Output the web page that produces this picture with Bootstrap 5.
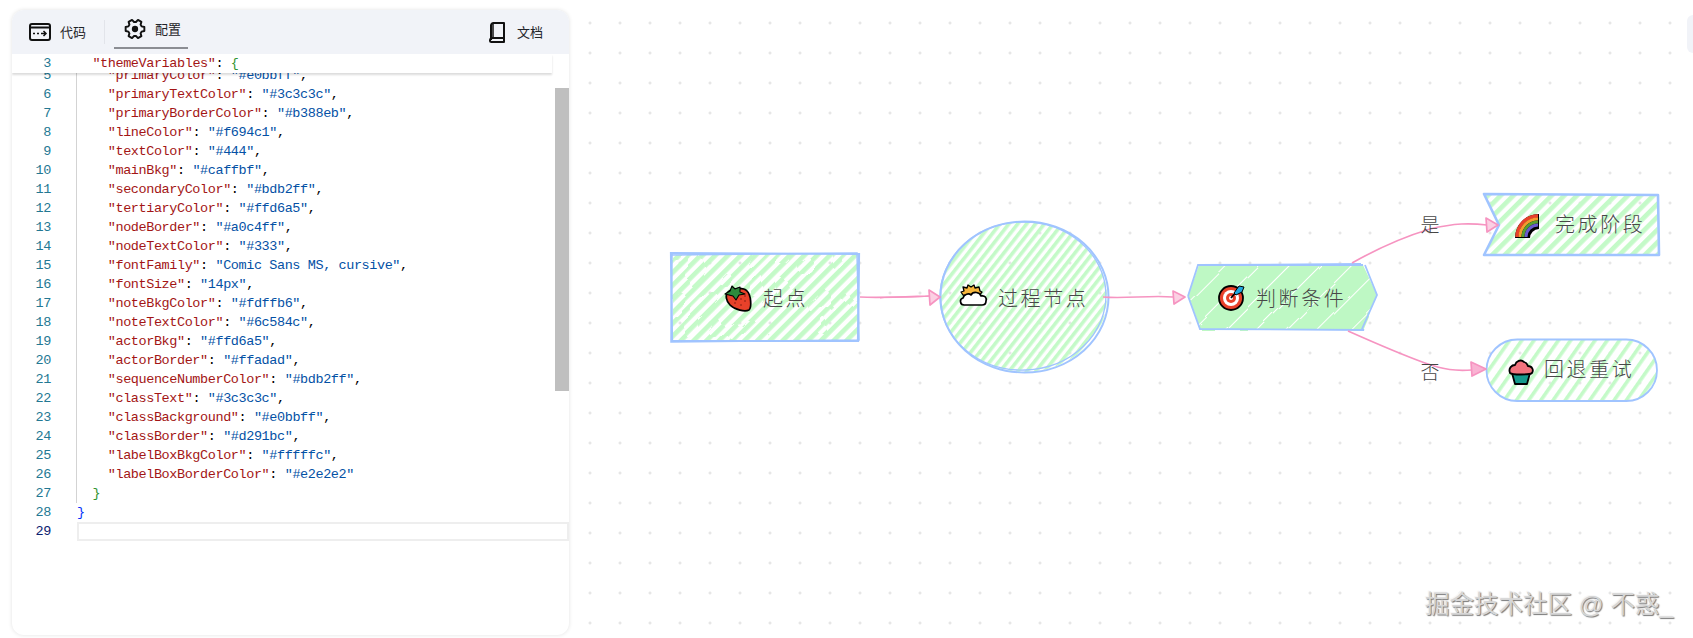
<!DOCTYPE html>
<html lang="zh">
<head>
<meta charset="utf-8">
<title>Mermaid 配置</title>
<link href="https://cdn.jsdelivr.net/npm/bootstrap@5.3.0/dist/css/bootstrap.min.css" rel="stylesheet">
<style>
html,body{height:100%;overflow:hidden}
body{background-color:#fff;background-image:radial-gradient(circle at center,#e6e6e6 0,#e6e6e6 1.2px,transparent 1.8px);background-size:30px 30px;background-position:5px 8px;font-family:"Noto Sans CJK SC","Liberation Sans",sans-serif}
.editor-panel{width:557px;height:625px;margin:10px 0 3px 12px;background:#fff;border-radius:12px;box-shadow:0 0 4px rgba(0,0,0,.12)}
.tab-bar{height:44px;background:#f1f3f8;padding:0 26px 0 17px;font-size:13px;color:#1f2329;flex:none}
.tab-item{height:44px;gap:9px}
.tab-active{padding:0 7px 0 10px;margin-left:9px;height:39px;border-bottom:2px solid #8b8d93;margin-top:0}
.tab-sep{width:1px;height:24px;background:#e2e4ea;margin-left:18px}
.code-font{font-family:"Liberation Mono",monospace;font-size:13.5px;letter-spacing:-.41px;line-height:19px;color:#000}
.sticky-row{height:19px;flex:none;margin-right:17px;box-shadow:0 2px 2px rgba(0,0,0,.14);position:relative;z-index:2;background:#fff}
.code-view{flex:1 1 auto;overflow:hidden;min-height:0}
.code-inner{margin-top:-7.5px}
.cl{display:flex;height:19px}
.ln{width:39px;text-align:right;color:#237893;flex:none}
.ct{flex:1 1 auto;margin-left:26px;display:block;white-space:pre}
.guide{border-left:1px solid #d3d3d3;margin-left:25px}
.k{color:#a31515}
.s{color:#0451a5}
.b1{color:#0431fa}
.b2{color:#319331}
.ln-cur{color:#0b216f}
.cur-line{box-shadow:inset 0 0 0 2px #eeeeee}
.v-thumb{position:absolute;right:0;top:78px;width:14px;height:303px;background:#bfbfbf}
.draw-area{min-width:0}
.draw-area svg{display:block}
.node-label{font-family:"Noto Sans CJK SC",sans-serif;font-size:20px;font-weight:300;letter-spacing:2.6px;fill:#484848}
.edge-label{font-family:"Noto Sans CJK SC",sans-serif;font-size:19px;font-weight:300;fill:#444}
.water-mark{position:absolute;left:856px;top:587px;font-size:24.5px;line-height:36px;white-space:nowrap;color:#d6d6d6;text-shadow:1px 1px 1px #777,-1px -1px 0 #f7f7f7;font-family:"Liberation Sans","Noto Sans CJK SC",sans-serif}
.edge-tab{position:absolute;right:0;top:15px;width:6px;height:38px;background:#f1f3f8;border-radius:8px 0 0 8px}
</style>
</head>
<body>
<main class="d-flex h-100">
  <aside class="editor-panel d-flex flex-column flex-shrink-0 overflow-hidden position-relative">
    <nav class="tab-bar d-flex align-items-start">
      <div class="tab-item d-flex align-items-center">
        <svg width="22" height="18" viewBox="0 0 22 18"><rect x="1" y="1" width="20" height="16" rx="2" fill="none" stroke="#111" stroke-width="2"/><path d="M1 4.5h20" stroke="#111" stroke-width="2.2"/><path d="M4 10.5h2M8 10.5h2M12 10.5h4.5M14.5 8l2.5 2.5-2.5 2.5" fill="none" stroke="#111" stroke-width="1.5"/></svg>
        <span>代码</span>
      </div>
      <div class="tab-sep align-self-center"></div>
      <div class="tab-item tab-active d-flex align-items-center">
        <svg width="22" height="22" viewBox="-11.5 -11.5 23 23"><path d="M6.86-2.77 9.78-2.08V2.08L6.86 2.77 5.83 4.56 6.69 7.43 3.09 9.51 1.03 7.33H-1.03L-3.09 9.51-6.69 7.43-5.83 4.56-6.86 2.77-9.78 2.08V-2.08L-6.86-2.77-5.83-4.56-6.69-7.43-3.09-9.51-1.03-7.33H1.03L3.09-9.51 6.69-7.43 5.83-4.56Z" fill="none" stroke="#111" stroke-width="2" stroke-linejoin="round"/><circle r="3.3" fill="#111"/></svg>
        <span>配置</span>
      </div>
      <div class="tab-item d-flex align-items-center ms-auto" style="gap:11px">
        <svg width="18" height="21" viewBox="0 0 18 21"><path d="M3 18V3.5A2.5 2.5 0 0 1 5.5 1H16v15H4.5A2.5 2.5 0 0 0 2 18.500 1.500 1.500 0 0 0 3.500 20H16v-4" fill="none" stroke="#111" stroke-width="2" stroke-linejoin="round"/><path d="M5 1v15" stroke="#111" stroke-width="1.500"/></svg>
        <span>文档</span>
      </div>
    </nav>
    <div class="sticky-row code-font d-flex"><span class="ln">3</span><span class="ct">  <span class="k">"themeVariables"</span>: <span class="b2">{</span></span></div>
    <div class="code-view code-font">
      <div class="code-inner">
        <div class="cl"><span class="ln">5</span><span class="ct guide">    <span class="k">"primaryColor"</span>: <span class="s">"#e0bbff"</span>,</span></div>
        <div class="cl"><span class="ln">6</span><span class="ct guide">    <span class="k">"primaryTextColor"</span>: <span class="s">"#3c3c3c"</span>,</span></div>
        <div class="cl"><span class="ln">7</span><span class="ct guide">    <span class="k">"primaryBorderColor"</span>: <span class="s">"#b388eb"</span>,</span></div>
        <div class="cl"><span class="ln">8</span><span class="ct guide">    <span class="k">"lineColor"</span>: <span class="s">"#f694c1"</span>,</span></div>
        <div class="cl"><span class="ln">9</span><span class="ct guide">    <span class="k">"textColor"</span>: <span class="s">"#444"</span>,</span></div>
        <div class="cl"><span class="ln">10</span><span class="ct guide">    <span class="k">"mainBkg"</span>: <span class="s">"#caffbf"</span>,</span></div>
        <div class="cl"><span class="ln">11</span><span class="ct guide">    <span class="k">"secondaryColor"</span>: <span class="s">"#bdb2ff"</span>,</span></div>
        <div class="cl"><span class="ln">12</span><span class="ct guide">    <span class="k">"tertiaryColor"</span>: <span class="s">"#ffd6a5"</span>,</span></div>
        <div class="cl"><span class="ln">13</span><span class="ct guide">    <span class="k">"nodeBorder"</span>: <span class="s">"#a0c4ff"</span>,</span></div>
        <div class="cl"><span class="ln">14</span><span class="ct guide">    <span class="k">"nodeTextColor"</span>: <span class="s">"#333"</span>,</span></div>
        <div class="cl"><span class="ln">15</span><span class="ct guide">    <span class="k">"fontFamily"</span>: <span class="s">"Comic Sans MS, cursive"</span>,</span></div>
        <div class="cl"><span class="ln">16</span><span class="ct guide">    <span class="k">"fontSize"</span>: <span class="s">"14px"</span>,</span></div>
        <div class="cl"><span class="ln">17</span><span class="ct guide">    <span class="k">"noteBkgColor"</span>: <span class="s">"#fdffb6"</span>,</span></div>
        <div class="cl"><span class="ln">18</span><span class="ct guide">    <span class="k">"noteTextColor"</span>: <span class="s">"#6c584c"</span>,</span></div>
        <div class="cl"><span class="ln">19</span><span class="ct guide">    <span class="k">"actorBkg"</span>: <span class="s">"#ffd6a5"</span>,</span></div>
        <div class="cl"><span class="ln">20</span><span class="ct guide">    <span class="k">"actorBorder"</span>: <span class="s">"#ffadad"</span>,</span></div>
        <div class="cl"><span class="ln">21</span><span class="ct guide">    <span class="k">"sequenceNumberColor"</span>: <span class="s">"#bdb2ff"</span>,</span></div>
        <div class="cl"><span class="ln">22</span><span class="ct guide">    <span class="k">"classText"</span>: <span class="s">"#3c3c3c"</span>,</span></div>
        <div class="cl"><span class="ln">23</span><span class="ct guide">    <span class="k">"classBackground"</span>: <span class="s">"#e0bbff"</span>,</span></div>
        <div class="cl"><span class="ln">24</span><span class="ct guide">    <span class="k">"classBorder"</span>: <span class="s">"#d291bc"</span>,</span></div>
        <div class="cl"><span class="ln">25</span><span class="ct guide">    <span class="k">"labelBoxBkgColor"</span>: <span class="s">"#fffffc"</span>,</span></div>
        <div class="cl"><span class="ln">26</span><span class="ct guide">    <span class="k">"labelBoxBorderColor"</span>: <span class="s">"#e2e2e2"</span></span></div>
        <div class="cl"><span class="ln">27</span><span class="ct guide">  <span class="b2">}</span></span></div>
        <div class="cl"><span class="ln">28</span><span class="ct b1">}</span></div>
        <div class="cl"><span class="ln ln-cur">29</span><span class="ct cur-line"></span></div>
      </div>
    </div>
    <div class="v-thumb"></div>
  </aside>

  <section class="draw-area flex-grow-1 position-relative">
    <svg width="1124" height="638" viewBox="569 0 1124 638">
      <defs>
        <pattern id="hatchA" width="9" height="9" patternUnits="userSpaceOnUse" patternTransform="rotate(-45)"><rect width="9" height="4.700" fill="#c4fac8"/></pattern>
        <pattern id="hatchB" width="7" height="7" patternUnits="userSpaceOnUse" patternTransform="rotate(-52)"><rect width="7" height="3.600" fill="#c4fac8"/></pattern>
        <pattern id="hatchC" width="22" height="22" patternUnits="userSpaceOnUse" patternTransform="rotate(-45)"><rect width="22" height="21" fill="#bef8c4"/></pattern>
        <pattern id="hatchD" width="10" height="10" patternUnits="userSpaceOnUse" patternTransform="rotate(-55)"><rect width="10" height="3.600" fill="#c4fac8"/></pattern>
        <filter id="wob" x="-5%" y="-5%" width="110%" height="110%"><feTurbulence type="fractalNoise" baseFrequency=".035" numOctaves="2" seed="4"/><feDisplacementMap in="SourceGraphic" scale="3.5"/></filter>
      </defs>

      <!-- rectangle -->
      <rect x="672" y="254" width="186" height="86" fill="url(#hatchA)" filter="url(#wob)"/>
      <path d="M671 253 859 254 858 341 672 341Z" fill="none" stroke="#a0c4ff" stroke-width="2.200"/>
      <path d="M672 255 857 253 859 340 671 342 672 253" fill="none" stroke="#a0c4ff" stroke-width="1.500"/>

      <!-- circle -->
      <ellipse cx="1024" cy="297" rx="83" ry="75" fill="url(#hatchB)"/>
      <ellipse cx="1024.500" cy="297" rx="84" ry="75.500" fill="none" stroke="#a0c4ff" stroke-width="2"/>
      <ellipse cx="1023" cy="296" rx="83" ry="74" transform="rotate(-2 1024 297)" fill="none" stroke="#a0c4ff" stroke-width="1.300"/>

      <!-- hexagon -->
      <path d="M1188 296 1199 265H1363L1377 295 1362 330H1200Z" fill="url(#hatchC)" filter="url(#wob)"/>
      <path d="M1188 296 1198 265 1361 264M1199 265 1363 265M1365 265 1377 295 1362 329 1364 330 1200 329 1188 296" fill="none" stroke="#a0c4ff" stroke-width="1.800"/>

      <!-- flag -->
      <path d="M1485 195H1657L1658 254H1485L1499 225Z" fill="url(#hatchA)"/>
      <path d="M1484 194 1658 195 1659 255 1484 255 1499 225Z" fill="none" stroke="#a0c4ff" stroke-width="2.600" stroke-linejoin="round"/>

      <!-- stadium -->
      <rect x="1487" y="340" width="170" height="61" rx="30.500" fill="url(#hatchD)"/>
      <rect x="1486.500" y="339.500" width="170.500" height="61.500" rx="30.700" fill="none" stroke="#a0c4ff" stroke-width="1.800"/>

      <!-- edges -->
      <g fill="none" stroke="#f694c1" stroke-width="1.700">
        <path d="M860 297C880 298 900 297 929 296"/>
        <path d="M880 298C895 296 910 298 930 296" stroke-width="1.100"/>
        <path d="M1103 297C1125 299 1150 295 1173 297"/>
        <path d="M1352 263C1375 250 1400 238 1430 229 1455 223 1470 223 1487 225"/>
        <path d="M1348 331C1375 343 1400 354 1425 363 1445 370 1455 371 1472 370"/>
      </g>
      <g fill="#fbd0e3" stroke="#f694c1" stroke-width="1.700" stroke-linejoin="round">
        <path d="M929 290 940 297 930 305Z"/>
        <path d="M1173 291 1185 297 1174 304Z"/>
        <path d="M1486 218 1498 225 1487 232Z"/>
        <path d="M1471 362 1486 369 1472 376Z" fill="#f9b3d3"/>
      </g>

      <!-- edge labels -->
      <text class="edge-label" x="1430" y="232" text-anchor="middle">是</text>
      <text class="edge-label" x="1430" y="379" text-anchor="middle">否</text>

      <!-- strawberry -->
      <g transform="translate(738 298)" stroke="#000" stroke-linejoin="round">
        <path d="M-10-6C-6-10 5-11 9-7 13-3 14 9 11 12 7 14-3 12-8 7-12 3-13-3-10-6Z" fill="#e8412a" stroke-width="1.700"/>
        <path d="M-13-4-8-7-6-12-3-9 2-11 2-6 7-4 1-3-2 2-5-2Z" fill="#2e8b3c" stroke-width="1.100"/>
        <g fill="#7d1d10" stroke="none"><circle cx="3" cy="1" r=".8"/><circle cx="7" cy="3" r=".8"/><circle cx="-3" cy="5" r=".8"/><circle cx="3" cy="7" r=".8"/><circle cx="7" cy="-2" r=".8"/></g>
      </g>

      <!-- sun behind cloud -->
      <g transform="translate(973 297)" stroke="#000" stroke-linejoin="round">
        <path d="M-10-2-12-5-9-6-10-10-6-9-5-12-2-10 1-12 2-9 6-10 7-6 9-5 5 0Z" fill="#f6b73c" stroke-width="1.300"/>
        <path d="M-9 8C-13 8-14 2-10 1-9-3-4-4-2-2 0-6 7-5 8-1 12-2 14 1 13 4 13 7 11 8 9 8Z" fill="#fff" stroke-width="1.700"/>
      </g>

      <!-- dart target -->
      <g transform="translate(1231 298)">
        <circle r="12" fill="#e8412a" stroke="#000" stroke-width="1.800"/>
        <circle r="8" fill="#fff"/>
        <circle r="5" fill="#e8412a"/>
        <circle r="2" fill="#fff"/>
        <path d="M0 0 5-6" stroke="#000" stroke-width="1.800"/>
        <path d="M3-5 8-12 13-11 11-6 5-3Z" fill="#1ea7e1" stroke="#000" stroke-width="1"/>
      </g>

      <!-- rainbow -->
      <g transform="translate(1527 226)" fill="none">
        <path d="M-12 12A24 24 0 0 1 12-12V3A9 9 0 0 0 3 12Z" fill="#000"/>
        <path d="M-10 11A21 21 0 0 1 11-10" stroke="#e8412a" stroke-width="3.400"/>
        <path d="M-7 11A18 18 0 0 1 11-7" stroke="#f59b2e" stroke-width="3"/>
        <path d="M-4 11A15 15 0 0 1 11-4" stroke="#5a9e2f" stroke-width="3"/>
        <path d="M-1 11A12 12 0 0 1 11-1" stroke="#6a5acd" stroke-width="3"/>
      </g>

      <!-- cupcake -->
      <g transform="translate(1521 372)" stroke="#000" stroke-linejoin="round">
        <path d="M-9 1-6 12H6L9 1Z" fill="#159a8c" stroke-width="1.800"/>
        <path d="M-11 1C-13-4-9-7-6-7-5-11 0-13 3-10 7-9 6-7 7-6 11-6 13-2 11 1 9 3-9 3-11 1Z" fill="#f2737e" stroke-width="1.800"/>
      </g>

      <!-- node text -->
      <text class="node-label" x="763" y="306">起点</text>
      <text class="node-label" x="998" y="306">过程节点</text>
      <text class="node-label" x="1256" y="306">判断条件</text>
      <text class="node-label" x="1555" y="232">完成阶段</text>
      <text class="node-label" x="1544" y="377">回退重试</text>
    </svg>
    <div class="water-mark">掘金技术社区 @ 不惑_</div>
    <div class="edge-tab"></div>
  </section>
</main>
<script src="https://cdn.jsdelivr.net/npm/bootstrap@5.3.0/dist/js/bootstrap.bundle.min.js"></script>
</body>
</html>
